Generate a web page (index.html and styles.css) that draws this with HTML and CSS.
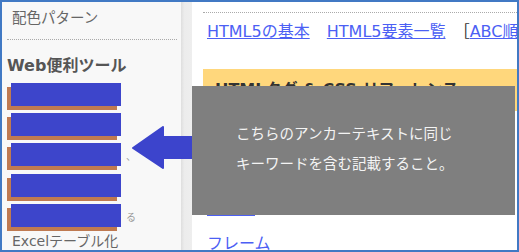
FILE: index.html
```html
<!DOCTYPE html>
<html lang="ja">
<head>
  <meta charset="UTF-8" />
  <meta name="viewport" content="width=device-width, initial-scale=1.0" />
  <title>アンカーテキスト</title>
  <link rel="stylesheet" href="styles.css">
</head>
<body>
  <div class="frame">
    <div class="sidebar">
      <div class="side-link">配色パターン</div>
      <h3 class="side-title">Web便利ツール</h3>
      <ul class="masked">
        <li><span class="mask"></span></li>
        <li><span class="mask"></span></li>
        <li><span class="mask"></span><span class="stray">、</span></li>
        <li><span class="mask"></span></li>
        <li><span class="mask"></span><span class="stray">る</span></li>
      </ul>
      <div class="side-link side-last">Excelテーブル化</div>
    </div>

    <div class="divider"></div>

    <div class="main">
      <div class="nav">
        <a href="#">HTML5の基本</a>
        <a href="#">HTML5要素一覧</a>
        <span class="bracket">［<a href="#">ABC順</a></span>
      </div>
      <div class="heading">HTMLタグ &amp; CSS リファレンス</div>
      <ul class="links">
        <li><a href="#">テキスト</a></li>
        <li><a href="#">画像</a></li>
        <li><a href="#">リンク</a></li>
        <li><a href="#">フレーム</a></li>
      </ul>
    </div>

    <!-- annotation over the screenshot -->
    <svg class="arrow" width="62" height="44" viewBox="0 0 62 44">
      <path d="M1,22 L31,1 L31,11 L61,11 L61,32 L31,32 L31,42 Z" fill="#3c44cc" stroke="#3c44cc" stroke-width="2" stroke-linejoin="round" />
    </svg>
    <div class="note">
      <p>こちらのアンカーテキストに同じ</p>
      <p>キーワードを含む記載すること。</p>
    </div>
  </div>
</body>
</html>
```

FILE: styles.css
```css
* {
  box-sizing: border-box;
}
body {
  margin: 0;
  font-family: "DejaVu Sans", "Noto Sans CJK JP", sans-serif;
  background: #ffffff;
}
.frame {
  position: relative;
  width: 519px;
  height: 252px;
  border: 2px solid #4179c4;
  display: flex;
  overflow: hidden;
}
.sidebar {
  flex: 0 0 179px;
  background: #f8f8f8;
  padding: 6px 0 0 5px;
}
.side-link {
  font-size: 14.5px;
  line-height: 20px;
  color: #666;
  padding-left: 5px;
  padding-bottom: 11px;
  border-bottom: 1px dotted #aaa;
  margin-right: 4px;
}
.side-title {
  margin: 15px 0 0;
  font-size: 16px;
  line-height: 22px;
  color: #555;
}
.masked {
  list-style: none;
  margin: 6px 0 0;
  padding: 0 0 0 4px;
}
.masked li {
  position: relative;
  height: 23px;
  margin-bottom: 7px;
}
.masked li:nth-child(3) {
  margin-bottom: 8px;
}
.mask {
  display: block;
  width: 110px;
  height: 23px;
  background: #3d45cb;
  box-shadow: -4px 4px 0 #bf7a51;
}
.stray {
  position: absolute;
  left: 115px;
  top: 5px;
  font-size: 10px;
  color: #999;
}
.side-last {
  border-bottom: none;
  font-size: 14px;
  margin-top: -3px;
}
.divider {
  flex: 0 0 11px;
  background: linear-gradient(to right, #dedede, #ececec 30%, #eeeeee);
}
.main {
  flex: 1;
  min-width: 0;
  overflow: hidden;
  padding: 10px 0 0 11px;
  background: #ffffff;
}
.nav {
  border-top: 1px dotted #aaa;
  padding: 8px 0 0 4px;
  font-size: 16px;
  line-height: 22px;
  white-space: nowrap;
}
.nav a {
  margin-right: 12px;
}
a {
  color: #4c5ff4;
}
.bracket {
  margin-left: -9px;
  color: #333;
}
.heading {
  margin-top: 26px;
  background: #ffd77c;
  padding: 7px 12px;
  height: 42px;
  font-size: 16px;
  font-weight: bold;
  color: #333;
  white-space: nowrap;
}
.links {
  list-style: none;
  margin: 0;
  padding: 0 0 0 4px;
  font-size: 16px;
  line-height: 22px;
}
.links li {
  margin-top: 13px;
}
.links li:first-child {
  margin-top: 17px;
}
.arrow {
  position: absolute;
  left: 130px;
  top: 124px;
}
.note {
  position: absolute;
  left: 190px;
  top: 84px;
  width: 323px;
  height: 129px;
  background: #7f7f7f;
  padding: 32px 0 0 44px;
  color: #f4f4f4;
  font-family: "Noto Sans CJK JP", sans-serif;
  font-size: 14.5px;
  line-height: 30px;
}
.note p {
  margin: 0;
}
```
